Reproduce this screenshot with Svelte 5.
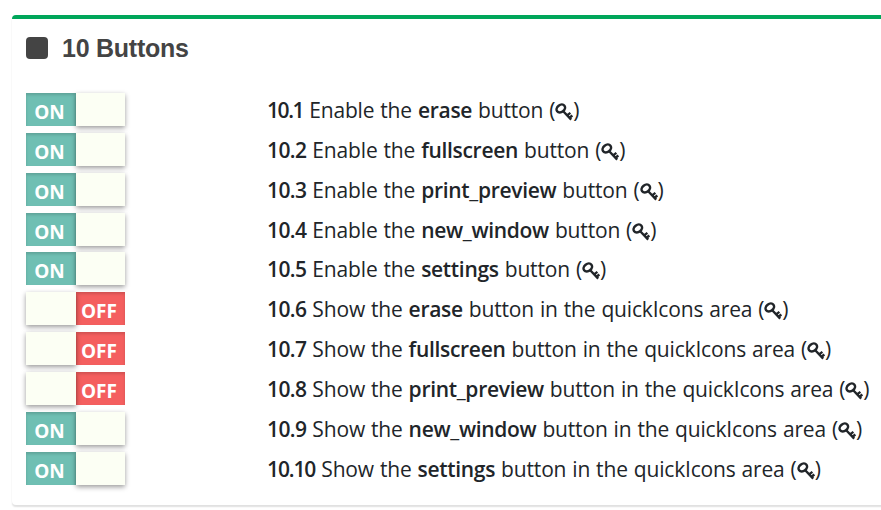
<script>
  const rows = [
    { n: '10.1', name: 'erase', on: true, quick: false },
    { n: '10.2', name: 'fullscreen', on: true, quick: false },
    { n: '10.3', name: 'print_preview', on: true, quick: false },
    { n: '10.4', name: 'new_window', on: true, quick: false },
    { n: '10.5', name: 'settings', on: true, quick: false },
    { n: '10.6', name: 'erase', on: false, quick: true },
    { n: '10.7', name: 'fullscreen', on: false, quick: true },
    { n: '10.8', name: 'print_preview', on: false, quick: true },
    { n: '10.9', name: 'new_window', on: true, quick: true },
    { n: '10.10', name: 'settings', on: true, quick: true }
  ];
</script>

<div class="page">
  <section class="card">
    <h2><span class="mark"></span>10 Buttons</h2>
    <div class="rows">
      {#each rows as row}
        <div class="row">
          <div class="switch" class:on={row.on}>
            {#if row.on}
              <span class="state">ON</span><span class="knob"></span>
            {:else}
              <span class="knob"></span><span class="state">OFF</span>
            {/if}
          </div>
          <div class="label"><b class="num" class:tight={row.n === '10.1'} class:wide={row.n === '10.10'}>{row.n}</b> {row.quick ? 'Show' : 'Enable'} the <b>{row.name}</b> button{row.quick ? ' in the quickIcons area' : ''} (<svg viewBox="0 0 18 18" width="18" height="18"><ellipse cx="5.8" cy="5.5" rx="4.6" ry="3.5" transform="rotate(-38 5.8 5.5)" fill="none" stroke="currentColor" stroke-width="2.5" /><path d="M8 8 L16.2 16.6 M12.1 12.4 L15.4 9.9 M14.4 15 L17.3 12.5" fill="none" stroke="currentColor" stroke-width="2.4" /></svg>)</div>
        </div>
      {/each}
    </div>
  </section>
</div>

<style>
  :global(body) { background: #fff; }
  .page {
    height: 510px;
    overflow: hidden;
    padding: 15px 0 0 12px;
    box-sizing: border-box;
  }
  .card {
    width: 900px;
    height: 490px;
    box-sizing: border-box;
    border-top: 4px solid #00a65a;
    border-radius: 4px;
    background: #fff;
    box-shadow: 0 1.5px 1.5px rgba(0, 0, 0, 0.12);
    padding: 14px 0 0 14px;
  }
  h2 {
    display: flex;
    align-items: center;
    gap: 14px;
    margin: 0;
    height: 30px;
    font: bold 25px/30px "Liberation Sans", Arial, sans-serif;
    letter-spacing: -0.25px;
    color: #444;
  }
  .mark {
    width: 22px;
    height: 22px;
    border-radius: 4px;
    background: #444;
  }
  .rows { padding-top: 30px; }
  .row {
    display: flex;
    height: 39.87px;
  }
  .switch {
    display: flex;
    width: 99px;
    height: 33px;
    background: #f45f5f;
    color: #fff;
    font: bold 19px/38px "Open Sans", "Noto Sans", sans-serif;
  }
  .switch.on { background: #6fbfb3; }
  .state {
    width: 49px;
    height: 33px;
    text-align: center;
    text-indent: -3px;
    box-shadow: inset 0 2px 3px rgba(0, 0, 0, 0.15);
  }
  .on .state { width: 50px; }
  .knob {
    position: relative;
    width: 50px;
    background: #fcfff4;
    box-shadow: 0 2px 5px rgba(0, 0, 0, 0.4);
  }
  .on .knob { width: 49px; }
  .label {
    margin-left: 142px;
    height: 33px;
    white-space: nowrap;
    font: 21px/35px "Open Sans", "Noto Sans", sans-serif;
    letter-spacing: -0.17px;
    word-spacing: 0.7px;
    color: #212529;
  }
  .label b {
    font-weight: 600;
    letter-spacing: -0.3px;
  }
  .label .num { letter-spacing: -0.6px; }
  .label .num.tight { letter-spacing: -1.4px; }
  .label .num.wide { letter-spacing: -1.1px; }
  svg { vertical-align: -3px; }
</style>
